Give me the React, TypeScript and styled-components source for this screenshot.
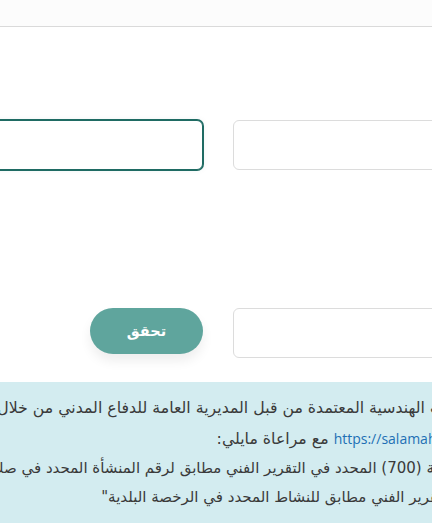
import React from "react";
import styled, { createGlobalStyle } from "styled-components";

const Global = createGlobalStyle`
  html, body {
    margin: 0;
    padding: 0;
    overflow: hidden;
    background: #ffffff;
  }
  body {
    font-family: "DejaVu Sans", "Noto Sans Arabic", sans-serif;
    color: #3b3b3b;
  }
`;

const Page = styled.div`
  display: flex;
  justify-content: center;
  width: 100%;
`;

const Card = styled.div`
  flex: 0 0 700px;
  width: 700px;
  direction: rtl;
  background: #ffffff;
`;

const CardHeader = styled.div`
  height: 26px;
  background: #fcfcfc;
  border-bottom: 1px solid #dadada;
`;

const FormArea = styled.div`
  padding: 93px 71px 0 75px;
`;

const FormRow = styled.div<{ $gap: number }>`
  display: grid;
  grid-template-columns: 1fr 1fr;
  column-gap: 30px;
  align-items: start;
  margin-bottom: ${(p) => p.$gap}px;
`;

const Field = styled.input<{ $focused?: boolean }>`
  box-sizing: border-box;
  width: 100%;
  height: 50px;
  border-radius: 6px;
  border: 1px solid ${(p) => (p.$focused ? "#1f6b63" : "#dcdcdc")};
  box-shadow: ${(p) =>
    p.$focused ? "0 0 0 1px #1f6b63, 0 0 6px rgba(31,107,99,0.08)" : "none"};
  background: #ffffff;
  outline: none;
  padding: 0 14px;
  font: inherit;
`;

const CheckButton = styled.button`
  justify-self: start;
  width: 113px;
  height: 46px;
  border: none;
  border-radius: 23px;
  background: #5fa59d;
  color: #ffffff;
  font-family: "DejaVu Sans", "Noto Sans Arabic", sans-serif;
  font-weight: 700;
  font-size: 14.5px;
  box-shadow: 0 7px 12px rgba(0, 0, 0, 0.07);
  cursor: pointer;
`;

const InfoBox = styled.div`
  margin: 0 37px 20px;
  background: #d3ecf0;
  border-radius: 4px;
  padding: 10px 20px 11px;
  color: #3a3a3a;
`;

const Para = styled.div`
  font-size: 15.75px;
  line-height: 31px;
`;

const ItemList = styled.div`
  font-size: 15px;
  line-height: 29px;
`;

const Line = styled.div`
  white-space: nowrap;
`;

const Link = styled.a`
  color: #1d70b5;
  text-decoration: none;
  font-size: 14px;
  font-family: "Open Sans", "Liberation Sans", sans-serif;
`;

export default function App() {
  return (
    <>
      <Global />
      <Page>
        <Card>
          <CardHeader />
          <FormArea>
            <FormRow $gap={138}>
              <Field type="text" />
              <Field type="text" $focused />
            </FormRow>
            <FormRow $gap={24}>
              <Field type="text" />
              <CheckButton type="button">تحقق</CheckButton>
            </FormRow>
          </FormArea>
          <InfoBox>
            <Para>
              <Line>
                أحد المكاتب الهندسية المعتمدة من قبل المديرية العامة للدفاع المدني من خلال منصة
              </Line>
              <Line>
                <Link href="#">https://salamah.998.gov.sa</Link> مع مراعاة مايلي:
              </Line>
            </Para>
            <ItemList>
              <Line>
                نموذج الوثيقة (700) المحدد في التقرير الفني مطابق لرقم المنشأة المحدد في صك الملكية
              </Line>
              <Line>
                نوعه في التقرير الفني مطابق للنشاط المحدد في الرخصة البلدية"
              </Line>
            </ItemList>
          </InfoBox>
        </Card>
      </Page>
    </>
  );
}
